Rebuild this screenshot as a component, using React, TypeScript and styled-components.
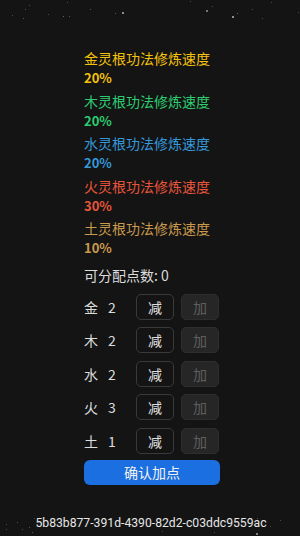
import styled, { createGlobalStyle } from "styled-components";

const GlobalStyle = createGlobalStyle`
  html, body {
    margin: 0;
    padding: 0;
    background: #141414;
  }
  body {
    font-family: Roboto, "Noto Sans CJK SC", sans-serif;
  }
`;

const Page = styled.div`
  position: relative;
  width: 300px;
  height: 536px;
  overflow: hidden;
  background: #141414;
`;

const Star = styled.span<{ $size: number; $alpha: number }>`
  position: absolute;
  width: ${(p) => p.$size}px;
  height: ${(p) => p.$size}px;
  border-radius: 50%;
  background: rgba(255, 255, 255, ${(p) => p.$alpha});
`;

const Panel = styled.div`
  display: flex;
  flex-direction: column;
  width: 136px;
  margin-left: 84px;
  padding-top: 49px;
`;

const Speed = styled.div`
  display: flex;
  flex-direction: column;
  margin-bottom: 4.5px;
`;

const SpeedTitle = styled.div<{ $color: string }>`
  font-family: "Noto Sans CJK SC", sans-serif;
  font-size: 14px;
  line-height: 19px;
  color: ${(p) => p.$color};
  white-space: nowrap;
`;

const SpeedValue = styled.div<{ $color: string }>`
  font-family: "Noto Sans CJK SC", sans-serif;
  font-size: 13px;
  font-weight: 700;
  line-height: 19px;
  color: ${(p) => p.$color};
`;

const Points = styled.div`
  font-family: "Noto Sans CJK SC", sans-serif;
  font-size: 14px;
  line-height: 20px;
  color: #dcdcdc;
  margin-top: 3px;
  margin-bottom: 9px;
`;

const Rows = styled.div`
  display: flex;
  flex-direction: column;
  gap: 7.5px;
`;

const Row = styled.div`
  display: flex;
  align-items: center;
  gap: 7px;
  height: 26px;
`;

const Label = styled.div`
  display: flex;
  gap: 10px;
  flex: 0 0 45px;
  font-family: "Noto Sans CJK SC", sans-serif;
  font-size: 14px;
  color: #dcdcdc;
`;

const Btn = styled.button<{ $disabled?: boolean }>`
  flex: 0 0 38px;
  height: 26px;
  padding: 0;
  border-radius: 5px;
  border: 1px solid ${(p) => (p.$disabled ? "#2e2e2e" : "#3a3a3a")};
  background: ${(p) => (p.$disabled ? "#262626" : "#141414")};
  color: ${(p) => (p.$disabled ? "#5e5e5e" : "#e0e0e0")};
  font-family: "Noto Sans CJK SC", sans-serif;
  font-size: 14px;
  line-height: 24px;
`;

const Confirm = styled.button`
  width: 136px;
  height: 25px;
  margin-top: 6px;
  border: none;
  border-radius: 6px;
  background: #1b6fe0;
  color: #f2f2f2;
  font-family: "Noto Sans CJK SC", sans-serif;
  font-size: 14px;
  padding: 0;
`;

const Footer = styled.div`
  position: absolute;
  left: 0;
  right: 0;
  top: 514px;
  text-align: center;
  padding-left: 2px;
  font-family: Roboto, sans-serif;
  font-size: 12.2px;
  line-height: 18px;
  color: #e6e6e6;
`;

const speeds = [
  { name: "金", value: "20%", color: "#f4c20d" },
  { name: "木", value: "20%", color: "#2ecc71" },
  { name: "水", value: "20%", color: "#3498db" },
  { name: "火", value: "30%", color: "#e8553a" },
  { name: "土", value: "10%", color: "#c99a4e" },
];

const points = [
  { name: "金", n: 2 },
  { name: "木", n: 2 },
  { name: "水", n: 2 },
  { name: "火", n: 3 },
  { name: "土", n: 1 },
];

const stars = [
  [25, 9, 1.4, 0.35], [29, 5, 1.2, 0.3], [67, 2, 1.2, 0.3], [90, 9, 1.2, 0.35],
  [122, 12, 1.6, 0.6], [115, 13, 1.2, 0.35], [12, 15, 1.2, 0.3], [23, 18, 1.3, 0.35],
  [48, 14, 1.2, 0.3], [63, 16, 1.4, 0.45], [69, 16, 1.2, 0.35], [190, 1, 1.2, 0.3],
  [206, 10, 1.6, 0.5], [212, 6, 1.2, 0.3], [232, 16, 2, 0.7], [237, 13, 1.4, 0.45],
  [252, 9, 1.2, 0.3], [271, 2, 1.2, 0.3], [262, 18, 1.2, 0.3], [298, 12, 1.2, 0.3],
  [17, 522, 1.4, 0.35], [6, 524, 1.2, 0.3], [6, 529, 1.2, 0.3], [22, 529, 1.2, 0.3],
  [29, 527, 1.2, 0.35], [32, 532, 1.4, 0.4], [34, 518, 1.2, 0.3], [162, 531, 1.2, 0.3],
  [214, 532, 1.2, 0.3], [257, 518, 1.4, 0.4], [256, 533, 1.6, 0.55], [280, 520, 1.2, 0.3],
  [270, 526, 1.2, 0.3],
];

export default function App() {
  return (
    <Page>
      <GlobalStyle />
      {stars.map(([x, y, s, a], i) => (
        <Star key={i} $size={s} $alpha={a} style={{ left: x, top: y }} />
      ))}
      <Panel>
        {speeds.map((s) => (
          <Speed key={s.name}>
            <SpeedTitle $color={s.color}>{s.name}灵根功法修炼速度</SpeedTitle>
            <SpeedValue $color={s.color}>{s.value}</SpeedValue>
          </Speed>
        ))}
        <Points>可分配点数: 0</Points>
        <Rows>
          {points.map((p) => (
            <Row key={p.name}>
              <Label>
                <span>{p.name}</span>
                <span>{p.n}</span>
              </Label>
              <Btn>减</Btn>
              <Btn $disabled>加</Btn>
            </Row>
          ))}
        </Rows>
        <Confirm>确认加点</Confirm>
      </Panel>
      <Footer>5b83b877-391d-4390-82d2-c03ddc9559ac</Footer>
    </Page>
  );
}
